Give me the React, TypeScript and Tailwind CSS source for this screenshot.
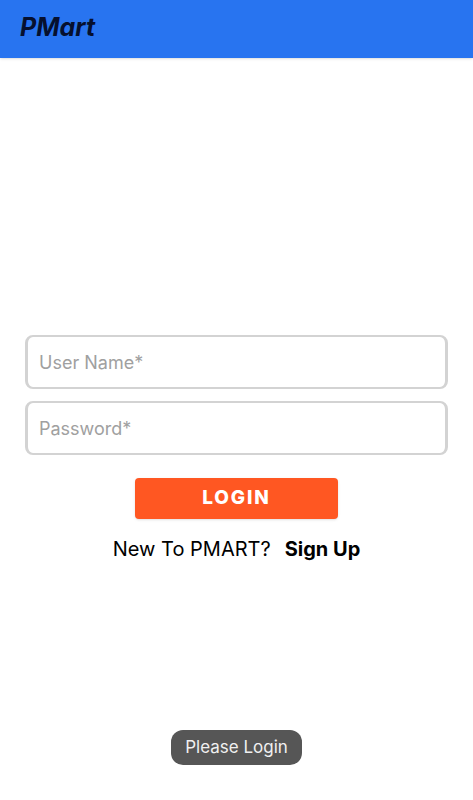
import React from "react";

export default function App() {
  return (
    <div className="flex min-h-screen flex-col bg-white font-['Inter','Roboto',sans-serif] text-black">
      <header className="flex h-[58px] items-center bg-[#2874f0] px-5 pb-0.5 shadow-sm">
        <h1 className="text-[25px] font-bold italic text-[#06102e]">PMart</h1>
      </header>
      <main className="flex flex-1 flex-col items-center px-[25px]">
        <form
          className="mt-[277px] flex w-full flex-col items-center gap-3"
          onSubmit={(e) => e.preventDefault()}
        >
          <input
            type="text"
            aria-label="User Name"
            placeholder="User Name*"
            className="h-[54px] w-full rounded-lg border-x-3 border-y-2 border-[#d3d3d3] px-[11px] text-lg placeholder:text-[#a0a0a0] focus:outline-none"
          />
          <input
            type="password"
            aria-label="Password"
            placeholder="Password*"
            className="h-[54px] w-full rounded-lg border-x-3 border-y-2 border-[#d3d3d3] px-[11px] text-lg placeholder:text-[#a0a0a0] focus:outline-none"
          />
          <button
            type="submit"
            className="mt-[11px] h-[41px] w-[203px] rounded bg-[#ff5722] text-[19px] font-extrabold tracking-widest text-white shadow"
          >
            LOGIN
          </button>
        </form>
        <p className="mt-4 flex gap-[14px] text-[20px] leading-7">
          <span>New To PMART?</span>
          <a href="#signup" className="font-bold">Sign Up</a>
        </p>
      </main>
      <div role="status" className="mb-[35px] flex h-[35px] items-center self-center rounded-xl bg-[#565656] px-[14px] text-[17px] text-[#f0f0f0]">
        Please Login
      </div>
    </div>
  );
}
